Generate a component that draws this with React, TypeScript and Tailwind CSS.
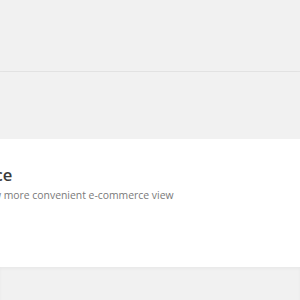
export default function App() {
  return (
    <div className="w-[300px] h-[300px] overflow-hidden bg-[#f1f1f1] font-['Open_Sans',sans-serif]">
      <div className="h-[72px] border-b border-[#e3e3e3]" />
      <div className="h-[67px] shadow-[0_3px_6px_rgba(0,0,0,0.035)]" />
      <div className="h-[128px] bg-white pt-[24px]">
        <div className="-ml-[74.5px] whitespace-nowrap">
          <h2 className="text-[16.6px] leading-[24px] font-semibold text-[#3a3a3a]">Commerce</h2>
          <p className="mt-0 text-[10.4px] leading-[16px] text-[#7a7a7a]">Switch to a new more convenient e-commerce view</p>
        </div>
      </div>
      <div className="h-[33px] shadow-[inset_0_2px_3px_rgba(0,0,0,0.035)]" />
    </div>
  );
}
